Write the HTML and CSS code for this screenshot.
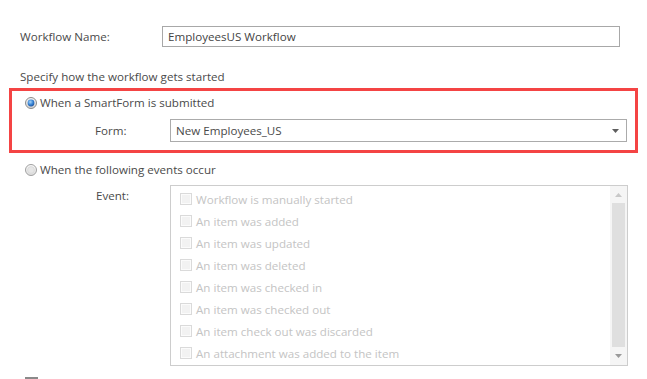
FILE: index.html
```html
<!DOCTYPE html>
<html lang="en">
<head>
<meta charset="utf-8">
<title>Workflow settings</title>
<link rel="stylesheet" href="styles.css">
</head>
<body>
<div class="page">
  <div class="name-row">
    <span class="name-label">Workflow Name:</span>
    <div class="textbox">EmployeesUS Workflow</div>
  </div>
  <div class="heading">Specify how the workflow gets started</div>
  <div class="highlight">
    <div class="radio-row">
      <svg class="radio" width="12" height="12" viewBox="0 0 12 12">
        <defs>
          <radialGradient id="rb" cx="0.4" cy="0.35" r="0.7">
            <stop offset="0" stop-color="#a8d4f7"/>
            <stop offset="0.55" stop-color="#3a86d6"/>
            <stop offset="1" stop-color="#1a4f9a"/>
          </radialGradient>
          <linearGradient id="rg" x1="0" y1="0" x2="0" y2="1">
            <stop offset="0" stop-color="#f4f4f4"/>
            <stop offset="1" stop-color="#d4d4d4"/>
          </linearGradient>
        </defs>
        <circle cx="6" cy="6" r="5.5" fill="url(#rg)" stroke="#8c8c8c"/>
        <circle cx="6" cy="6" r="3.4" fill="url(#rb)"/>
      </svg>
      <span class="radio-text">When a SmartForm is submitted</span>
    </div>
    <div class="field-row">
      <span class="field-label">Form:</span>
      <div class="select">
        <span>New Employees_US</span>
        <svg class="select-arrow" width="7" height="4" viewBox="0 0 7 4"><path d="M0 0H7L3.5 4Z" fill="#5e5e5e"/></svg>
      </div>
    </div>
  </div>
  <div class="radio-row outer">
    <svg class="radio" width="12" height="12" viewBox="0 0 12 12">
      <defs>
        <linearGradient id="rg2" x1="0" y1="0" x2="0" y2="1">
          <stop offset="0" stop-color="#fafafa"/>
          <stop offset="1" stop-color="#dcdcdc"/>
        </linearGradient>
      </defs>
      <circle cx="6" cy="6" r="5.5" fill="url(#rg2)" stroke="#a0a0a0"/>
      <circle cx="6" cy="6" r="3.4" fill="#e6e6e6" stroke="#d2d2d2" stroke-width="0.6"/>
    </svg>
    <span class="radio-text">When the following events occur</span>
  </div>
  <div class="event-row">
    <span class="event-label">Event:</span>
    <div class="listbox">
      <ul class="items">
        <li><span class="check"></span>Workflow is manually started</li>
        <li><span class="check"></span>An item was added</li>
        <li><span class="check"></span>An item was updated</li>
        <li><span class="check"></span>An item was deleted</li>
        <li><span class="check"></span>An item was checked in</li>
        <li><span class="check"></span>An item was checked out</li>
        <li><span class="check"></span>An item check out was discarded</li>
        <li><span class="check"></span>An attachment was added to the item</li>
      </ul>
      <div class="scrollbar">
        <div class="sb-btn"><svg width="7" height="4" viewBox="0 0 7 4"><path d="M0 4H7L3.5 0Z" fill="#c8c8c8"/></svg></div>
        <div class="sb-thumb"></div>
        <div class="sb-btn"><svg width="7" height="4" viewBox="0 0 7 4"><path d="M0 0H7L3.5 4Z" fill="#9a9a9a"/></svg></div>
      </div>
    </div>
  </div>
  <div class="dash"></div>
</div>
</body>
</html>
```
FILE: styles.css
```css
* { box-sizing: border-box; }
html, body { margin: 0; padding: 0; background: #fff; }
body {
  font-family: "Open Sans", "Noto Sans", sans-serif;
  font-size: 11.6px;
  color: #4a4a4a;
  overflow: hidden;
}
.page { width: 647px; height: 379px; padding-top: 26px; overflow: hidden; }

.name-row {
  display: flex;
  align-items: center;
  padding-left: 20px;
  height: 21px;
}
.name-label { width: 142px; }
.textbox {
  width: 458px;
  height: 21px;
  border: 1px solid #a8a8a8;
  padding-left: 5px;
  line-height: 19px;
  color: #444;
}

.heading {
  margin-top: 21px;
  padding-left: 20px;
  height: 18px;
  line-height: 18px;
}

.highlight {
  margin-top: 2px;
  margin-left: 9px;
  width: 629px;
  height: 65px;
  border: 3px solid #f44444;
  padding: 3px 0 0 13px;
}

.radio-row {
  display: flex;
  align-items: center;
  height: 18px;
}
.radio-row.outer {
  margin-top: 8px;
  padding-left: 25px;
}
.radio { flex: none; margin-right: 3px; }
.radio-text { line-height: 18px; }

.field-row {
  display: flex;
  align-items: center;
  margin-top: 7px;
  padding-left: 70px;
}
.field-label { width: 75px; }
.select {
  width: 457px;
  height: 23px;
  border: 1px solid #ababab;
  display: flex;
  align-items: center;
  justify-content: space-between;
  padding: 0 7px 0 5px;
}
.select-arrow { display: block; }

.event-row {
  display: flex;
  align-items: flex-start;
  margin-top: 6px;
  padding-left: 96px;
}
.event-label { width: 74px; padding-top: 2px; line-height: 18px; }
.listbox {
  width: 458px;
  height: 181px;
  border: 1px solid #cdcdcd;
  display: flex;
  justify-content: space-between;
}
.items {
  list-style: none;
  margin: 0;
  padding: 2px 0 0 9px;
}
.items li {
  height: 22px;
  display: flex;
  align-items: center;
  color: #c4c4c4;
}
.check {
  width: 12px;
  height: 12px;
  border: 1px solid #dadada;
  background: #f2f2f2;
  box-shadow: inset 0 0 0 1px #fbfbfb;
  margin-right: 4px;
  flex: none;
}
.scrollbar {
  width: 17px;
  height: 179px;
  background: #f5f5f5;
  display: flex;
  flex-direction: column;
  align-items: center;
}
.sb-btn {
  height: 17px;
  width: 100%;
  display: flex;
  align-items: center;
  justify-content: center;
}
.sb-btn svg { display: block; }
.sb-thumb {
  width: 13px;
  height: 144px;
  background: #dfdfdf;
}
.sb-btn:last-child { height: 18px; }

.dash {
  margin-top: 11px;
  margin-left: 25px;
  width: 13px;
  height: 2px;
  background: #8a8a8a;
}
```
